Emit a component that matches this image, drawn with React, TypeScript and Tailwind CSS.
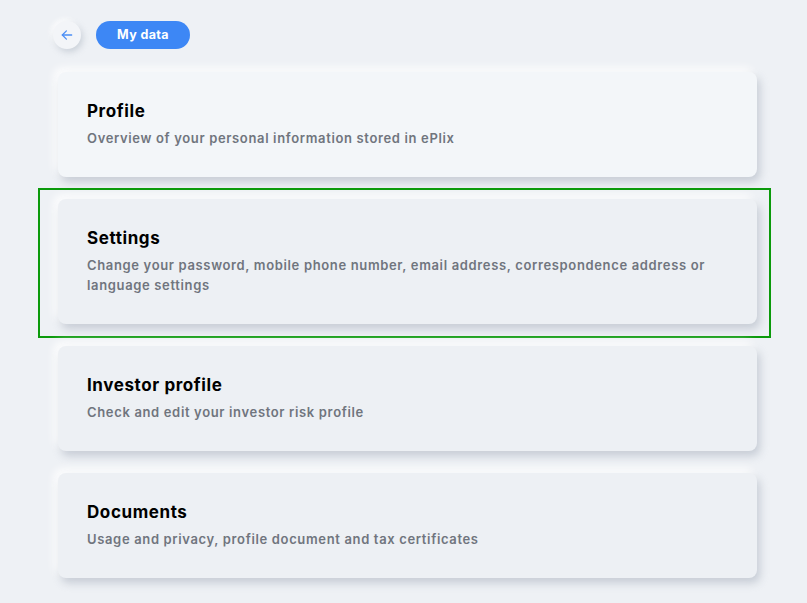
import React from "react";

const cards = [
  { title: "Profile", desc: "Overview of your personal information stored in ePlix", light: true },
  {
    title: "Settings",
    desc: "Change your password, mobile phone number, email address, correspondence address or language settings",
    highlight: true,
  },
  { title: "Investor profile", desc: "Check and edit your investor risk profile" },
  { title: "Documents", desc: "Usage and privacy, profile document and tax certificates" },
];

export default function App() {
  return (
    <div
      className="min-h-[603px] w-full bg-[#eef1f5] pl-[53px] pr-[50px] pt-[21px]"
      style={{ fontFamily: "Inter, 'Noto Sans', sans-serif" }}
    >
      <div className="flex items-center gap-[15px]">
        <button className="flex h-[28px] w-[28px] items-center justify-center rounded-full bg-[#f3f5f8] shadow-[2px_3px_6px_rgba(160,170,185,0.45),-2px_-2px_5px_rgba(255,255,255,0.9)]">
          <svg width="14" height="14" viewBox="0 0 24 24" fill="none" stroke="#4b8ef5" strokeWidth="2.2" strokeLinecap="round" strokeLinejoin="round">
            <path d="M20 12H4" />
            <path d="M11 5l-7 7 7 7" />
          </svg>
        </button>
        <div className="flex h-[28px] w-[94px] items-center justify-center rounded-full bg-[#3d87f5] text-[12.5px] font-bold tracking-[0.03em] text-white">
          My data
        </div>
      </div>
      <div className="mt-[23px] flex flex-col gap-[22px] pl-[5px]">
        {cards.map((c) => (
          <div key={c.title} className="relative">
            {c.highlight && (
              <div className="pointer-events-none absolute -bottom-[14px] -left-[20px] -right-[14px] -top-[11px] border-2 border-[#0b9a0b]" />
            )}
            <div
              className={`rounded-[8px] px-[29px] pb-[29px] pt-[27px] shadow-[3px_5px_8px_rgba(150,160,175,0.45),-4px_-4px_8px_rgba(255,255,255,0.95)] ${
                c.light ? "bg-[#f3f6f9]" : "bg-[#edf0f4]"
              }`}
            >
              <div className="text-[17px] font-bold leading-[24px] tracking-[0.035em] text-black">{c.title}</div>
              <div className="mt-[5px] text-[13px] font-semibold leading-[20px] tracking-[0.05em] text-[#70757e]">{c.desc}</div>
            </div>
          </div>
        ))}
      </div>
    </div>
  );
}
